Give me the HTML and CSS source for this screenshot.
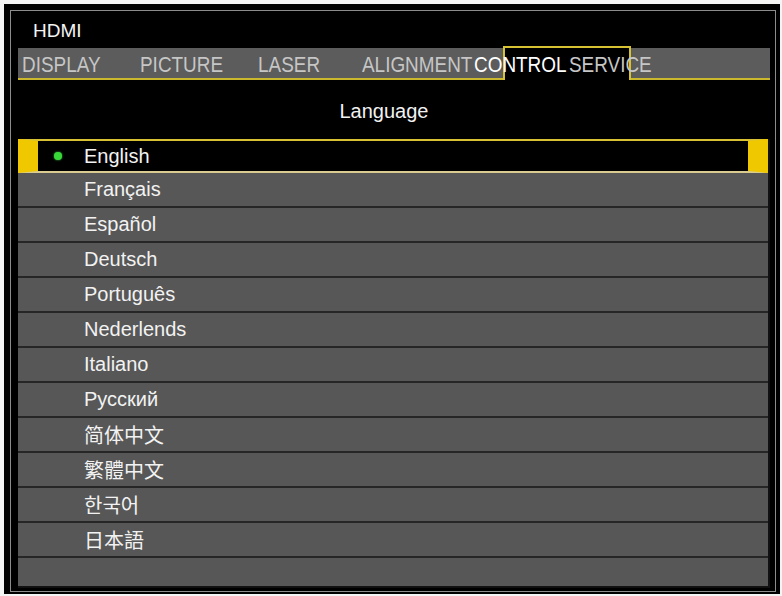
FILE: index.html
```html
<!DOCTYPE html>
<html lang="en">
<head>
<meta charset="UTF-8">
<title>HDMI - Control - Language</title>
<meta name="viewport" content="width=device-width, initial-scale=1.0">
<link rel="stylesheet" href="styles.css">
</head>
<body>

<div class="frame">
  <div class="screen">
    <div class="source">HDMI</div>

    <div class="tabs">
      <div class="tab-active"></div>
      <span class="tab tab-wide">DISPLAY</span>
      <span class="tab tab-wide">PICTURE</span>
      <span class="tab tab-laser">LASER</span>
      <span class="tab tab-align">ALIGNMENT</span>
      <span class="tab tab-control current">CONTROL</span>
      <span class="tab">SERVICE</span>
    </div>

    <div class="title">Language</div>

    <div class="list">
      <div class="row selected"><span class="mark"></span>English</div>
      <div class="row"><span class="mark"></span>Français</div>
      <div class="row"><span class="mark"></span>Español</div>
      <div class="row"><span class="mark"></span>Deutsch</div>
      <div class="row"><span class="mark"></span>Português</div>
      <div class="row"><span class="mark"></span>Nederlends</div>
      <div class="row"><span class="mark"></span>Italiano</div>
      <div class="row"><span class="mark"></span>Русский</div>
      <div class="row"><span class="mark"></span>简体中文</div>
      <div class="row"><span class="mark"></span>繁體中文</div>
      <div class="row"><span class="mark"></span>한국어</div>
      <div class="row"><span class="mark"></span>日本語</div>
      <div class="row empty"></div>
    </div>
  </div>
</div>

</body>
</html>
```

FILE: styles.css
```css
body {
  margin: 0;
  background-color: #f4f4f4;
  font-family: "Liberation Sans", Arial, "Noto Sans CJK SC", sans-serif;
}

.frame {
  width: 776px;
  height: 590px;
  margin: 4px 0 0 4px;
  padding: 6px 4px 2px 6px;
  box-sizing: border-box;
  background-color: #000;
}

.screen {
  height: 100%;
  box-sizing: border-box;
  border: 1px solid #8c8c8c;
  padding: 0 5px 3px 7px;
  display: flex;
  flex-direction: column;
}

/* input source name */
.source {
  height: 35px;
  box-sizing: border-box;
  padding: 4px 0 0 15px;
  line-height: 31px;
  font-size: 19px;
  color: #f4f4f4;
}

/* menu tabs */
.tabs {
  position: relative;
  height: 27px;
  margin: 2px 0;
  padding: 3px 0 0 4px;
  background-color: #5c5c5c;
  border-bottom: 2px solid #cbb82c;
  display: flex;
}

.tab-active {
  position: absolute;
  left: 485px;
  top: -2px;
  width: 128px;
  height: 34px;
  box-sizing: border-box;
  border: 2px solid #d6c232;
  border-bottom: none;
  background-color: #000;
}

.tab {
  display: inline-block;
  position: relative;
  z-index: 1;
  line-height: 27px;
  font-size: 22px;
  color: #c6c6c6;
  white-space: nowrap;
  transform: scaleX(0.86);
  transform-origin: left center;
}

.tab-wide { width: 118px; }
.tab-laser { width: 104px; }
.tab-align { width: 112px; }
.tab-control { width: 95px; }

.tab.current {
  color: #fff;
}

.title {
  height: 57px;
  box-sizing: border-box;
  padding: 1px 20px 0 0;
  line-height: 56px;
  text-align: center;
  font-size: 20px;
  color: #f2f2f2;
}

/* language list */
.list {
  flex: 1;
  display: flex;
  flex-direction: column;
  background-color: #575757;
  border-right: 2px solid #111;
  border-bottom: 2px solid #111;
}

.row {
  height: 35px;
  flex-shrink: 0;
  box-sizing: border-box;
  padding-left: 36px;
  border-bottom: 2px solid #262626;
  display: flex;
  align-items: center;
  font-size: 20px;
  color: #f2f2f2;
}

.mark {
  width: 8px;
  height: 8px;
  margin-right: 22px;
  border-radius: 50%;
}

.row.selected {
  height: 34px;
  padding-left: 16px;
  background-color: #000;
  border-top: 2px solid #d8c234;
  border-bottom: 2px solid #d9cc8e;
  border-left: 20px solid #f0c800;
  border-right: 20px solid #f0c800;
}

.row.selected .mark {
  background-color: #39d839;
  box-shadow: 0 0 2px #39d839;
}

.row.empty {
  flex: 1;
  border-bottom: none;
}
```
